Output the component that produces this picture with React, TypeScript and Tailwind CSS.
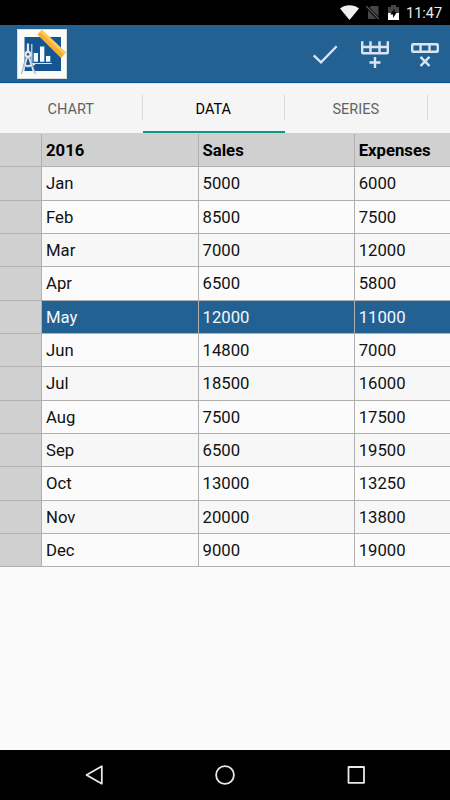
import React from 'react';

interface RowData {
  month: string;
  sales: string;
  expenses: string;
}

const rows: RowData[] = [
  { month: 'Jan', sales: '5000', expenses: '6000' },
  { month: 'Feb', sales: '8500', expenses: '7500' },
  { month: 'Mar', sales: '7000', expenses: '12000' },
  { month: 'Apr', sales: '6500', expenses: '5800' },
  { month: 'May', sales: '12000', expenses: '11000' },
  { month: 'Jun', sales: '14800', expenses: '7000' },
  { month: 'Jul', sales: '18500', expenses: '16000' },
  { month: 'Aug', sales: '7500', expenses: '17500' },
  { month: 'Sep', sales: '6500', expenses: '19500' },
  { month: 'Oct', sales: '13000', expenses: '13250' },
  { month: 'Nov', sales: '20000', expenses: '13800' },
  { month: 'Dec', sales: '9000', expenses: '19000' },
];

const tabs = ['CHART', 'DATA', 'SERIES'];

const StatusBar: React.FC = () => (
  <div className="flex h-[25px] shrink-0 items-center justify-end bg-black pr-2 text-[#ececec]">
    <svg width="19" height="15" viewBox="0 0 19 15" fill="#f0f0f0">
      <path d="M0 3.500C5.500-.9 13.500-.9 19 3.500L9.500 15z" />
    </svg>
    <svg className="ml-[7px]" width="13" height="15" viewBox="0 0 13 15">
      <path d="M5 1h7.500v13H2V4z" fill="#464646" />
      <path d="M0 1l13 13.500" stroke="#000" strokeWidth="3" />
      <path d="M.3 1.200l12.500 12.800" stroke="#5c5c5c" strokeWidth="1.300" />
    </svg>
    <svg className="ml-[9px]" width="11" height="15" viewBox="0 0 11 15">
      <path d="M3 0h5v2h3v13H0V2h3z" fill="#464646" />
      <path d="M0 8h11v7H0z" fill="#fff" />
      <path d="M6.500 3.500L2.200 9.500H5V13l4-6H6.500z" fill="#000" />
    </svg>
    <span className="ml-[7px] w-9 whitespace-nowrap pt-0.5 text-[14.500px] leading-[25px]">11:47</span>
  </div>
);

const Logo: React.FC = () => (
  <svg width="50" height="50" viewBox="0 0 50 50">
    <rect x=".5" y=".5" width="49" height="49" fill="#fbfbfa" stroke="#d5dce2" />
    <rect x="7.500" y="8" width="36.500" height="34" fill="#155592" />
    <path d="M14.800 15v19.500h20" fill="none" stroke="#d5e4ed" strokeWidth="1.200" />
    <path d="M16.700 24h4.300v8.800h-4.300zM23 17.500h4.300v15.300H23zM29 27h4.300v5.800H29z" fill="#f5f9fb" />
    <path d="M20.300 5.500L25 .8L49 23.500L44 29z" fill="#f8af2d" />
    <path d="M25 .8L49 23.500L47 25.600L23 2.800z" fill="#fecb5c" />
    <g fill="none" stroke="#e7ebed" strokeWidth="2.200">
      <path d="M11 14.500v8M10 28L5 44.500M12 28L17.500 44.500" />
      <circle cx="11" cy="25.300" r="2.400" />
      <path d="M5.500 34.500c2 3.500 9 3.500 12 0" />
    </g>
    <g fill="none" stroke="#718696" strokeWidth=".6">
      <path d="M9.600 18v4M9 28.500L4.300 45M13 28.500L18.500 45M6.500 36.500c2 2 7 2 10 0" />
      <circle cx="11" cy="25.300" r="1.200" />
    </g>
  </svg>
);

const ActionBar: React.FC = () => (
  <header className="flex h-[58px] shrink-0 items-center justify-between border-b border-[#075290] bg-[#236192] pl-[17px]">
    <Logo />
    <div className="flex items-center text-[#dbe5f2]">
      <svg width="50" height="57" viewBox="0 0 50 57" fill="none" stroke="currentColor">
        <path d="M13.700 30.300L21 37.300L36.700 21.300" strokeWidth="2.300" />
      </svg>
      <svg width="50" height="57" viewBox="0 0 50 57" fill="none" stroke="currentColor" strokeWidth="2.400">
        <path d="M12.200 16.300v11.200q0 .8.800.8h24q.8 0 .8-.8V16.300M12 22h26M20.500 16.300v12M29.500 16.300v12" />
        <path d="M25 32v11M19.500 37.500h11" />
      </svg>
      <svg width="50" height="57" viewBox="0 0 50 57" fill="none" stroke="currentColor" strokeWidth="2.400">
        <rect x="12.200" y="19.200" width="25.600" height="7.600" rx="1" />
        <path d="M20.500 19v8M29.500 19v8" />
        <path d="M20.500 31.800l9 9.200M29.500 31.800l-9 9.200" />
      </svg>
    </div>
  </header>
);

const TabBar: React.FC = () => (
  <nav className="flex h-[50px] shrink-0 overflow-hidden border-t border-[#e1e5e8] bg-[#f5f5f5]">
    {tabs.map((tab) => (
      <div
        key={tab}
        className={`flex w-[142.500px] shrink-0 items-center border-b-2 ${
          tab === 'DATA' ? 'border-[#0b9985] text-black' : 'border-transparent text-[#626262]'
        }`}
      >
        <span className="flex-1 pt-1 text-center text-[14.500px]">{tab}</span>
        <span className="h-[25px] w-px bg-[#d9d9d9]" />
      </div>
    ))}
  </nav>
);

const DataTable: React.FC = () => (
  <div className="w-full overflow-hidden bg-[#d0d0d0] pt-px text-[16.700px] text-[#111]">
    <div className="grid h-[33.333px] grid-cols-[42px_156.500px_156.200px_1fr] font-bold text-black">
      <div className="border-r border-b border-[#b0b0b0]" />
      <div className="flex items-center border-r border-b border-[#b0b0b0] pt-px pl-1">2016</div>
      <div className="flex items-center border-r border-b border-[#b0b0b0] pt-px pl-1">Sales</div>
      <div className="flex items-center border-b border-[#b0b0b0] pt-px pl-1">Expenses</div>
    </div>
    {rows.map((row, index) => (
      <div
        key={row.month}
        className={`grid h-[33.333px] grid-cols-[42px_156.500px_156.200px_1fr] ${
          row.month === 'May'
            ? 'bg-[#236192] text-[#f4f8fb]'
            : index % 2 === 0
              ? 'bg-[#f7f7f7]'
              : 'bg-[#fbfbfb]'
        }`}
      >
        <div className="border-r border-b border-[#b0b0b0] bg-[#d0d0d0]" />
        <div className="flex items-center border-r border-b border-[#b0b0b0] pt-px pl-1">{row.month}</div>
        <div className="flex items-center border-r border-b border-[#b0b0b0] pt-px pl-1">{row.sales}</div>
        <div className="flex items-center border-b border-[#b0b0b0] pt-px pl-1">{row.expenses}</div>
      </div>
    ))}
  </div>
);

const NavigationBar: React.FC = () => (
  <footer className="flex h-[50px] shrink-0 items-center justify-center bg-black">
    <svg width="290" height="50" viewBox="0 0 290 50" fill="none" stroke="#e8e8e8" strokeWidth="1.800" strokeLinejoin="round">
      <path d="M21.800 16.300v17.400L6.500 25z" />
      <circle cx="145" cy="25" r="8.900" />
      <rect x="268.500" y="17" width="15.500" height="15.800" />
    </svg>
  </footer>
);

export default function App() {
  return (
    <div className="flex h-[800px] w-[450px] flex-col overflow-hidden bg-[#fafafa] font-['Roboto',sans-serif]">
      <StatusBar />
      <ActionBar />
      <TabBar />
      <main className="flex-1">
        <DataTable />
      </main>
      <NavigationBar />
    </div>
  );
}
